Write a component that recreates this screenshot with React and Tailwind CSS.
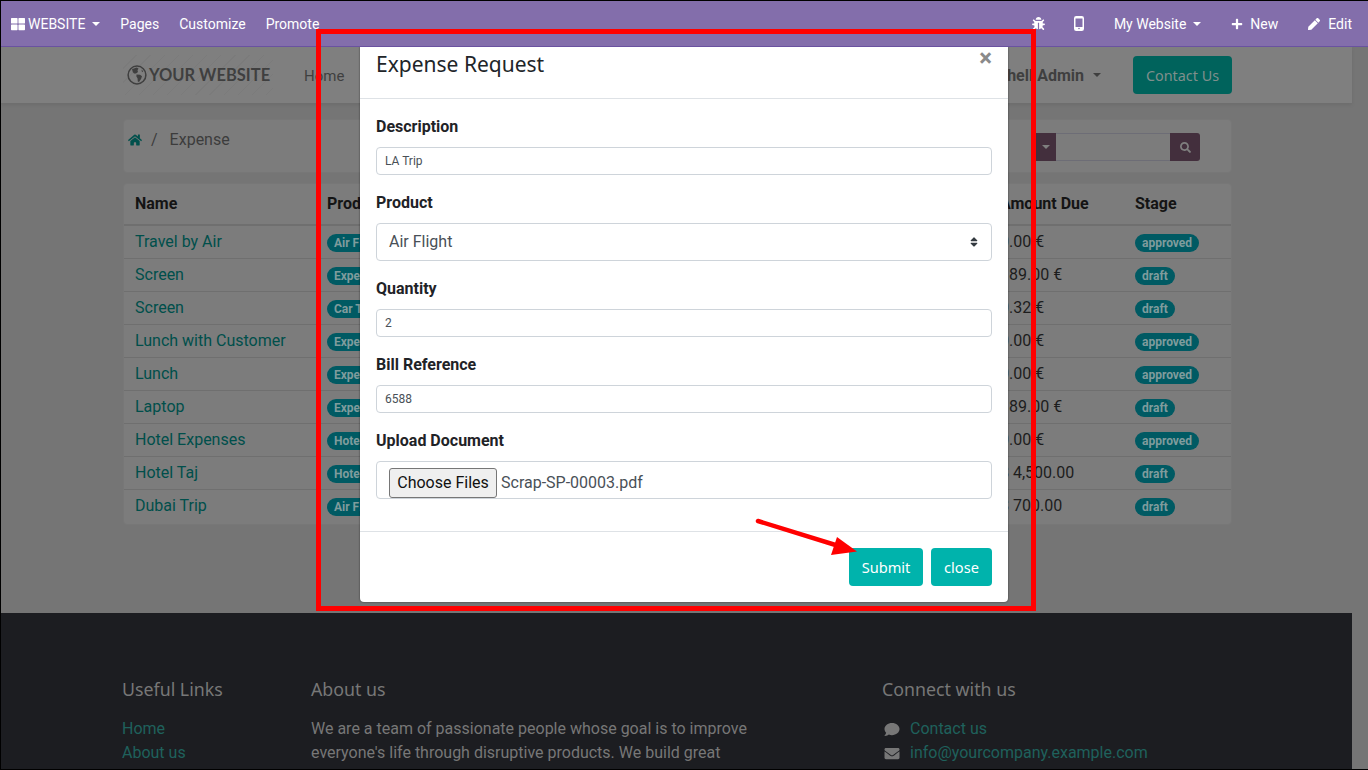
import React from 'react';
import {
  FaBug,
  FaComment,
  FaEnvelope,
  FaHome,
  FaPen,
  FaPlus,
  FaSearch,
  FaSort,
  FaThLarge,
} from 'react-icons/fa';

const rows = [
  { name: 'Travel by Air', product: 'Air Flight', amount: '0.00 €', stage: 'approved' },
  { name: 'Screen', product: 'Expenses', amount: '189.00 €', stage: 'draft' },
  { name: 'Screen', product: 'Car Travel', amount: '0.32 €', stage: 'draft' },
  { name: 'Lunch with Customer', product: 'Expenses', amount: '0.00 €', stage: 'approved' },
  { name: 'Lunch', product: 'Expenses', amount: '0.00 €', stage: 'approved' },
  { name: 'Laptop', product: 'Expenses', amount: '189.00 €', stage: 'draft' },
  { name: 'Hotel Expenses', product: 'Hotel', amount: '0.00 €', stage: 'approved' },
  { name: 'Hotel Taj', product: 'Hotel', amount: '$ 4,500.00', stage: 'draft' },
  { name: 'Dubai Trip', product: 'Air Flight', amount: '$ 700.00', stage: 'draft' },
];

const Caret = ({ className }) => (
  <span className={`inline-block w-0 h-0 border-x-[4px] border-x-transparent border-t-[4px] ${className}`} />
);

const Badge = ({ children }) => (
  <span className="inline-block h-[18px] px-[7px] rounded-full bg-[#005a63] text-[#7f9c9d] text-xs font-bold leading-[18px] whitespace-nowrap">
    {children}
  </span>
);

// FontAwesome 4 style phone, outline with a home button
const PhoneIcon = () => (
  <svg className="ml-[29px]" width="10" height="15" viewBox="0 0 10 15" fill="none">
    <rect x="0.75" y="0.75" width="8.5" height="13.5" rx="1.5" stroke="#fff" strokeWidth="1.5" />
    <rect x="1" y="11" width="8" height="3" fill="#fff" />
    <rect x="1" y="1" width="8" height="1.5" fill="#fff" />
    <circle cx="5" cy="12.5" r="0.8" fill="#836eab" />
  </svg>
);

const GlobeIcon = () => (
  <svg className="shrink-0" width="20" height="20" viewBox="0 0 20 20" fill="none">
    <circle cx="10" cy="10" r="8.9" stroke="#3f3f3f" strokeWidth="1.5" />
    <path d="M5 4.2 L9.5 2.6 L11.5 3.6 L10.5 5.2 L11 7 L9 8.6 L7 8.4 L5.8 7 Z" fill="#3f3f3f" />
    <path d="M9.5 9.4 L13 9.8 L15 11.2 L14 14 L12 17 L10.8 16.6 L10.6 13.4 L9.4 11.4 Z" fill="#3f3f3f" />
    <path d="M14.5 4.6 L16.2 6.2 L15 7.2 Z" fill="#3f3f3f" />
  </svg>
);

const TopBar = () => (
  <div className="relative z-30 h-[46px] bg-[#836eab] border-b border-[#6a52a0] flex items-center justify-between text-white text-sm pl-[10px] pr-4">
    <div className="flex items-center">
      <FaThLarge className="text-[14px]" />
      <span className="ml-[3px]">WEBSITE</span>
      <Caret className="ml-[7px] border-t-white" />
      <span className="ml-5">Pages</span>
      <span className="ml-5">Customize</span>
      <span className="ml-5">Promote</span>
    </div>
    <div className="flex items-center">
      <FaBug className="text-[13px]" />
      <PhoneIcon />
      <span className="ml-[30px]">My Website</span>
      <Caret className="ml-[7px] border-t-white" />
      <FaPlus className="ml-[30px] text-[12px]" />
      <span className="ml-[7px]">New</span>
      <FaPen className="ml-[30px] text-[12px]" />
      <span className="ml-2">Edit</span>
    </div>
  </div>
);

const SiteHeader = () => (
  <div className="h-14 bg-[#7f7f7f] shadow-[0_2px_4px_rgba(0,0,0,0.08)] flex items-center justify-between pl-[122px] pr-[120px]">
    <div className="flex items-center">
      <div className="h-10 w-[150px] flex items-center pl-[4px] text-[#3f3f3f] bg-[repeating-linear-gradient(135deg,transparent_0,transparent_9px,rgba(0,0,0,0.03)_9px,rgba(0,0,0,0.03)_10px)]">
        <GlobeIcon />
        <span className="ml-[2px] font-['Lato',sans-serif] font-bold text-[16.5px] whitespace-nowrap">YOUR WEBSITE</span>
      </div>
      <span className="ml-[31px] mt-[3px] text-[15px] text-[#3f3f3f]">Home</span>
    </div>
    <div className="flex items-center">
      <span className="font-bold text-[#3f3f3f] mt-[2px]">Mitchell Admin</span>
      <Caret className="ml-[9px] border-t-[#3f3f3f]" />
      <div className="ml-8 pt-[1px] h-[38px] w-[99px] rounded-[4px] bg-[#00635c] text-[#7f8f8c] font-['Noto_Sans',sans-serif] text-[14.4px] flex items-center justify-center">Contact Us</div>
    </div>
  </div>
);

const Breadcrumb = () => (
  <div className="mt-4 h-[54px] rounded-[4px] border border-[#777] bg-[#7c7c7c] flex justify-between pl-[3px] pr-[31px]">
    <div className="flex items-center h-10 text-[#3c3c3c] text-base">
      <FaHome className="text-[#00504c] text-[14px] ml-px" />
      <span className="ml-[9px]">/</span>
      <span className="ml-3">Expense</span>
    </div>
    <div className="mt-[13px] h-7 flex">
      <div className="w-[21px] bg-[#432f3d] flex items-center justify-center">
        <Caret className="border-t-[#7f7f7f]" />
      </div>
      <div className="w-[114px] border-y border-[#6d6d76] bg-[#7c7c7c]" />
      <div className="w-[30px] rounded-r-[3px] bg-[#432f3d] flex items-center justify-center">
        <FaSearch className="text-[#7f7f7f] text-[11px]" />
      </div>
    </div>
  </div>
);

const ExpenseTable = () => (
  <div className="mt-[10px] pb-[2px] rounded-[4px] border border-[#777] bg-[#7c7c7c] overflow-hidden">
    <table className="w-full table-fixed">
      <colgroup>
        <col className="w-[191px]" />
        <col className="w-[673px]" />
        <col className="w-[135px]" />
        <col className="w-[108px]" />
      </colgroup>
      <thead>
        <tr className="h-[41px] border-b-2 border-[#6f6f6f] text-left text-[#141414] font-bold">
          <th className="pl-[11px]">Name</th>
          <th className="pl-3">Product</th>
          <th className="pl-3">Amount Due</th>
          <th className="pl-3">Stage</th>
        </tr>
      </thead>
      <tbody>
        {rows.map((row, i) => (
          <tr key={i} className="h-[33px] border-b border-[#6f6f6f] last:border-b-0 text-[#1d1d1d]">
            <td className="pl-[11px] text-[#004f4b]">{row.name}</td>
            <td className="pl-3"><Badge>{row.product}</Badge></td>
            <td className="pl-3 whitespace-nowrap">{row.amount}</td>
            <td className="pl-3"><Badge>{row.stage}</Badge></td>
          </tr>
        ))}
      </tbody>
    </table>
  </div>
);

const Footer = () => (
  <div className="flex-1 bg-[#1c1d21] pt-[62px] pl-[121px] flex text-[#777]">
    <div className="w-[189px]">
      <h5 className="font-['Noto_Sans',sans-serif] text-[17.8px] leading-[28px]">Useful Links</h5>
      <ul className="mt-[14px] text-[#1f615c]">
        <li className="h-6">Home</li>
        <li className="h-6">About us</li>
      </ul>
    </div>
    <div className="w-[571px]">
      <h5 className="font-['Noto_Sans',sans-serif] text-[17.8px] leading-[28px]">About us</h5>
      <p className="mt-[14px] w-[460px]">
        We are a team of passionate people whose goal is to improve everyone's life through disruptive products. We build great
      </p>
    </div>
    <div>
      <h5 className="font-['Noto_Sans',sans-serif] text-[17.8px] leading-[28px]">Connect with us</h5>
      <ul className="mt-[14px] text-[#1f615c]">
        <li className="h-6 flex items-center">
          <FaComment className="ml-[2px] w-4 text-[#777] text-[15px]" />
          <span className="ml-[10px]">Contact us</span>
        </li>
        <li className="h-6 flex items-center">
          <FaEnvelope className="ml-[2px] w-4 text-[#777] text-[15px]" />
          <span className="ml-[10px]">info@yourcompany.example.com</span>
        </li>
      </ul>
    </div>
  </div>
);

const Field = ({ label, children, last }) => (
  <div className={last ? '' : 'mb-4'}>
    <label className="block h-6 mb-2 font-bold text-[#1f2327] leading-6">{label}</label>
    {children}
  </div>
);

const SmallInput = ({ value }) => (
  <input
    readOnly
    value={value}
    className="block w-full h-7 px-2 text-xs text-[#495057] bg-white border border-[#ced4da] rounded-[4px] outline-none"
  />
);

const ExpenseModal = () => (
  <div className="absolute z-20 left-[359px] top-[46px] w-[648px] h-[555px] bg-white rounded-b-[4px] shadow-[0_0_2px_rgba(0,0,0,0.6)] flex flex-col">
    <div className="h-[52px] border-b border-[#dee2e6] flex justify-between pl-4 pr-4">
      <h4 className="mt-[1px] font-['Noto_Sans',sans-serif] text-[21px] leading-[33px] text-[#212529]">Expense Request</h4>
      <span className="mt-[-3px] text-[24px] leading-[28px] font-bold text-[#8a8a8a]">×</span>
    </div>
    <div className="flex-1 p-4">
      <Field label="Description"><SmallInput value="LA Trip" /></Field>
      <Field label="Product">
        <div className="h-[38px] border border-[#ced4da] rounded-[4px] flex items-center justify-between pl-3 pr-[11px] text-[#495057]">
          <span>Air Flight</span>
          <FaSort className="text-[12px] text-[#343a40]" />
        </div>
      </Field>
      <Field label="Quantity"><SmallInput value="2" /></Field>
      <Field label="Bill Reference"><SmallInput value="6588" /></Field>
      <Field label="Upload Document" last>
        <div className="h-[38px] border border-[#ced4da] rounded-[4px] flex items-center pt-[5px] pl-3 text-[#495057]">
          <button className="h-[30px] w-[108px] bg-[#efefef] border border-[#767676] rounded-[3px] text-[#111]">Choose Files</button>
          <span className="ml-1">Scrap-SP-00003.pdf</span>
        </div>
      </Field>
    </div>
    <div className="h-[71px] border-t border-[#dee2e6] flex items-center justify-end gap-2 pr-4 font-['Noto_Sans',sans-serif] text-[14.6px] text-white">
      <button className="h-[38px] w-[74px] pt-[2px] rounded-[4px] bg-[#00b3ac]">Submit</button>
      <button className="h-[38px] w-[61px] pt-[2px] rounded-[4px] bg-[#00b3ac]">close</button>
    </div>
  </div>
);

// annotation drawn on top of the screenshot
const Annotation = () => (
  <>
    <div className="absolute z-40 left-[315px] top-[28px] w-[720px] h-[582px] border-[5px] border-[#ff0000]" />
    <svg className="absolute z-40 left-[749px] top-[509px]" width="120" height="60" viewBox="0 0 120 60">
      <line x1="8" y1="11" x2="92" y2="37" stroke="#ff0000" strokeWidth="4.5" strokeLinecap="round" />
      <polygon points="107,41.5 87,27 81,45" fill="#ff0000" />
    </svg>
  </>
);

export default function App() {
  return (
    <div className="relative w-[1368px] h-[770px] overflow-hidden bg-[#757575] border-t border-l border-b border-black font-['Roboto',sans-serif] text-base">
      <TopBar />
      <div className="w-[1351px] h-[722px] flex flex-col">
        <SiteHeader />
        <div className="h-[510px] pl-[122px] pr-[120px]">
          <Breadcrumb />
          <ExpenseTable />
        </div>
        <Footer />
      </div>
      <ExpenseModal />
      <Annotation />
    </div>
  );
}
